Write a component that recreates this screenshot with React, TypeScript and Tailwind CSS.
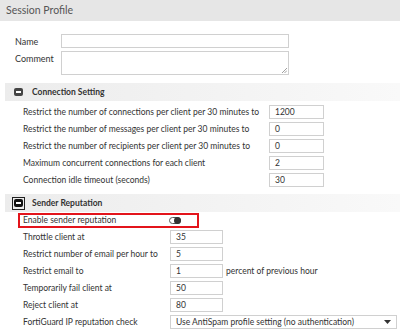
import React from 'react';

const conn = [
  ['Restrict the number of connections per client per 30 minutes to', '1200'],
  ['Restrict the number of messages per client per 30 minutes to', '0'],
  ['Restrict the number of recipients per client per 30 minutes to', '0'],
  ['Maximum concurrent connections for each client', '2'],
  ['Connection idle timeout (seconds)', '30'],
];

const sender = [
  ['Throttle client at', '35', ''],
  ['Restrict number of email per hour to', '5', ''],
  ['Restrict email to', '1', 'percent of previous hour'],
  ['Temporarily fail client at', '50', ''],
  ['Reject client at', '80', ''],
];

function Box({ value, w }: { value: string; w: string }) {
  return (
    <div className={`${w} h-[14px] shrink-0 border border-[#d0d0d0] bg-white flex items-center px-[5px] text-[#333]`}>
      {value}
    </div>
  );
}

function SectionHead({ title, focused }: { title: string; focused?: boolean }) {
  return (
    <div className="h-[18px] bg-gradient-to-r from-[#ececec] to-[#f9f9f9] flex items-center">
      <div className={`ml-[7px] w-[13px] h-[13px] flex items-center justify-center ${focused ? 'border border-[#222]' : ''}`}>
        <div className={`w-[9px] h-[8px] rounded-[2px] ${focused ? 'bg-[#111]' : 'bg-[#444]'} flex items-center justify-center`}>
          <div className="w-[5px] h-[2px] bg-white" />
        </div>
      </div>
      <span className="ml-[7px] font-bold text-[#333]">{title}</span>
    </div>
  );
}

export default function App() {
  return (
    <div className="w-[400px] h-[335px] overflow-hidden bg-white text-[8.5px] text-[#333] font-['Lato',sans-serif] leading-none whitespace-nowrap">
      <div className="h-[21px] bg-[#e6e6e6] flex items-center px-[6px] text-[10.5px] text-[#555]">Session Profile</div>

      <div className="pt-[13px] pl-[15px] flex flex-col gap-[3px] text-[9px]">
        <div className="flex items-center">
          <span className="w-[46px]">Name</span>
          <div className="w-[228px] h-[14px] border border-[#d0d0d0]" />
        </div>
        <div className="flex items-start">
          <span className="w-[46px] pt-[3px]">Comment</span>
          <div className="relative w-[228px] h-[24px] border border-[#d0d0d0]">
            <svg className="absolute right-[1px] bottom-[1px]" width="5" height="5" viewBox="0 0 5 5">
              <path d="M5 0L0 5M5 2.5L2.5 5" stroke="#888" strokeWidth="0.8" />
            </svg>
          </div>
        </div>
      </div>

      <div className="ml-[5px] mt-[8px]">
        <SectionHead title="Connection Setting" />
        <div className="pt-[4px] pl-[18px] flex flex-col gap-[3px]">
          {conn.map(([l, v]) => (
            <div key={l} className="flex items-center h-[14px]">
              <span className="w-[246px]">{l}</span>
              <Box value={v} w="w-[55px]" />
            </div>
          ))}
        </div>
      </div>

      <div className="ml-[5px] mt-[7px]">
        <SectionHead title="Sender Reputation" focused />
        <div className="mt-[1px] ml-[13px] w-[181px] h-[15px] border-2 border-[#e3141b] flex items-center">
          <span className="ml-[3px] w-[146px]">Enable sender reputation</span>
          <div className="relative w-[12px] h-[7px] rounded-full border border-[#555] bg-white">
            <div className="absolute right-[-1px] top-[-1px] w-[7px] h-[7px] rounded-full bg-[#333]" />
          </div>
        </div>
        <div className="pt-[2px] pl-[18px] flex flex-col gap-[3px]">
          {sender.map(([l, v, s]) => (
            <div key={l} className="flex items-center h-[14px]">
              <span className="w-[147px]">{l}</span>
              <Box value={v} w="w-[53px]" />
              {s && <span className="ml-[3px]">{s}</span>}
            </div>
          ))}
          <div className="flex items-center h-[14px]">
            <span className="w-[147px]">FortiGuard IP reputation check</span>
            <div className="w-[227px] h-[14px] border border-[#d0d0d0] flex items-center justify-between px-[5px]">
              <span>Use AntiSpam profile setting (no authentication)</span>
              <svg width="7" height="4" viewBox="0 0 7 4"><path d="M0 0H7L3.5 4Z" fill="#333" /></svg>
            </div>
          </div>
        </div>
      </div>
    </div>
  );
}
